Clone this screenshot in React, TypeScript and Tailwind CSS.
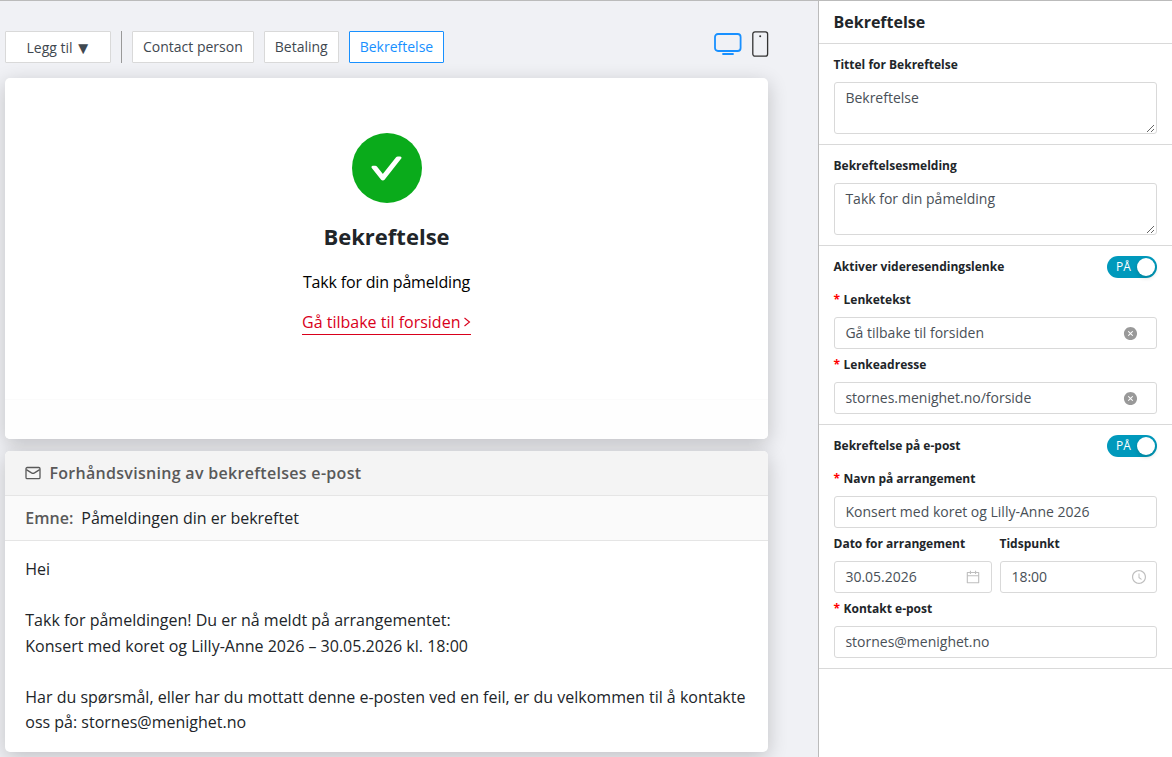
import type { ReactNode } from "react";
import {
  AiFillCloseCircle,
  AiOutlineCalendar,
  AiOutlineCheck,
  AiOutlineClockCircle,
} from "react-icons/ai";

function TabButton({ children, active = false }: { children: ReactNode; active?: boolean }) {
  return (
    <button
      className={
        "h-8 rounded-[1px] border bg-white px-[10px] whitespace-nowrap " +
        (active ? "border-[#1890ff] text-[#1890ff]" : "border-[#d9d9d9] text-[#3f4850]")
      }
    >
      {children}
    </button>
  );
}

function Section({ children }: { children: ReactNode }) {
  return <section className="border-b border-[#d9d9d9] pr-[15px] pb-[10px] pl-[15px]">{children}</section>;
}

function TextArea({ label, value }: { label: string; value: string }) {
  return (
    <Section>
      <div className="-ml-[0.5px] h-[38px] pt-[10px] text-xs leading-[22px] font-bold">{label}</div>
      <div className="flex h-[52px] justify-between rounded-[3px] border border-[#d9d9d9] pt-1 pl-[10.4px] leading-[22px] text-[#495057]">
        <span>{value}</span>
        <svg className="mr-px mb-0 size-[9px] self-end" viewBox="0 0 9 9" fill="none" stroke="#555" strokeWidth="0.9">
          <path d="M1 8 8 1M5 8l3-3" />
        </svg>
      </div>
    </Section>
  );
}

function ToggleRow({ label }: { label: string }) {
  return (
    <div className="mt-[10px] mb-[6px] flex h-[22px] items-center justify-between">
      <span className="-ml-[0.5px] text-xs leading-[22px] font-bold">{label}</span>
      <div className="flex h-[22px] w-[50px] items-center justify-between rounded-full bg-[#0099bc] pr-[2px] pl-[9px] text-xs text-white">
        <span>PÅ</span>
        <span className="size-[18px] rounded-full bg-white shadow-[0_2px_4px_rgba(0,35,11,0.2)]" />
      </div>
    </div>
  );
}

function Field({
  label,
  value,
  required = false,
  icon,
}: {
  label: string;
  value: string;
  required?: boolean;
  icon?: ReactNode;
}) {
  return (
    <div className="min-w-0">
      <div className="-ml-[0.5px] flex h-[33px] gap-[3.5px] pt-[5px] text-xs leading-[22px] font-bold">
        {required && <span className="text-[#f00]">*</span>}
        {label}
      </div>
      <div className="flex h-8 items-center justify-between rounded-[3px] border border-[#d9d9d9] pl-[10.4px] text-[#495057]">
        <span className="pb-px">{value}</span>
        {icon}
      </div>
    </div>
  );
}

function Toolbar() {
  return (
    <div className="flex h-8 text-sm">
      <button className="flex h-8 w-[106px] items-center justify-center gap-[2px] rounded-[1px] border border-[#d9d9d9] bg-white pt-px pl-[2px] text-[#3f4850]">
        Legg til <span className="text-[17px] leading-4">▼</span>
      </button>
      <div className="mx-[10px] w-px bg-[#999]" />
      <div className="flex gap-[10px]">
        <TabButton>Contact person</TabButton>
        <TabButton>Betaling</TabButton>
        <TabButton active>Bekreftelse</TabButton>
      </div>
      <div className="-mr-px ml-auto flex gap-[10px]">
        <svg className="mt-[2px] h-[23px] w-[28px]" viewBox="0 0 28 23" fill="none" stroke="#1890ff" strokeWidth="1.8" strokeLinecap="round">
          <rect x="1" y="1" width="25.6" height="17" rx="3" />
          <path d="M9 21h10" />
        </svg>
        <svg className="h-[26px] w-[17px]" viewBox="0 0 17 26" fill="none" stroke="#333" strokeWidth="1.3">
          <rect x="0.8" y="0.9" width="14.8" height="24.2" rx="2.2" />
          <circle cx="8.2" cy="5.3" r="1" fill="#333" stroke="none" />
        </svg>
      </div>
    </div>
  );
}

function ConfirmationCard() {
  return (
    <div className="mt-[15px] flex h-[361px] flex-col items-center rounded-[5px] bg-white pt-[55px] shadow-[0_5px_20px_rgba(0,0,0,0.2)]">
      <div className="flex size-[70px] items-center justify-center rounded-full bg-[#0aab1b]">
        <AiOutlineCheck className="size-[35px] text-white" stroke="currentColor" strokeWidth="64" strokeLinejoin="round" />
      </div>
      <h1 className="mt-[17px] text-[22px] leading-8 font-bold text-[#212529]">Bekreftelse</h1>
      <p className="mt-[18px] leading-6 tracking-[-0.18px] text-black">Takk for din påmelding</p>
      <a className="mt-[16px] flex h-[25px] items-center border-b border-[#d9001b] pl-[0.5px] text-[#d9001b]">
        Gå tilbake til forsiden
        <svg className="ml-[3px] h-[12px] w-[8px]" viewBox="0 0 8 12" fill="none" stroke="currentColor" strokeWidth="1.1">
          <path d="m1.5 2 5 4-5 4" />
        </svg>
      </a>
      <div className="mt-[64px] w-full flex-1 rounded-b-[5px] border-t border-[#fbfbfb] bg-[#fefefe]" />
    </div>
  );
}

function EmailPreview() {
  return (
    <div className="mt-3 h-[301px] rounded-[5px] bg-white leading-[25.6px] text-[#212529] shadow-[0_5px_20px_rgba(0,0,0,0.2)]">
      <div className="flex h-[45px] items-center gap-2 rounded-t-[5px] border-b border-[#e5e5e5] bg-[#f4f4f4] pl-5 font-semibold text-[#595959]">
        <svg className="size-4" viewBox="0 0 16 16" fill="none" stroke="currentColor" strokeWidth="1.3">
          <rect x="1" y="2.5" width="14" height="11.2" rx="1.2" />
          <path d="m1.3 4.6 5.2 3.3q1.5.9 3 0l5.2-3.3" />
        </svg>
        <span className="pt-[1.5px] pl-[0.4px] tracking-[0.3px]">Forhåndsvisning av bekreftelses e-post</span>
      </div>
      <div className="flex h-[45px] items-center gap-2 border-b border-[#e5e5e5] bg-[#fafafa] pt-[1.5px] pl-[20.3px]">
        <span className="font-semibold text-[#595959]">Emne:</span>
        <span>Påmeldingen din er bekreftet</span>
      </div>
      <div className="pt-[15.85px] pr-[19px] pl-[20.3px]">
        <p>Hei</p>
        <p className="mt-[25.6px]">
          Takk for påmeldingen! Du er nå meldt på arrangementet:
          <br />
          Konsert med koret og Lilly-Anne 2026 – 30.05.2026 kl. 18:00
        </p>
        <p className="mt-[25.6px]">
          Har du spørsmål, eller har du mottatt denne e-posten ved en feil, er du velkommen til å kontakte oss på:
          stornes@menighet.no
        </p>
      </div>
    </div>
  );
}

export default function App() {
  const clear = <AiFillCloseCircle className="mr-[18px] size-[15px] text-[#999]" />;
  return (
    <div className="flex h-[757px] w-[1172px] overflow-hidden border-t border-[#bbb] bg-[#f0f1f5] font-['Open_Sans',sans-serif]">
      <main className="w-[818px] pt-[30px] pr-[50px] pl-[5px]">
        <Toolbar />
        <ConfirmationCard />
        <EmailPreview />
      </main>
      <aside className="w-[354px] border-l border-[#bbb] bg-white text-sm text-[#212529]">
        <h2 className="h-[43px] border-b border-[#d9d9d9] pt-[9px] pl-[14.5px] text-base font-bold">Bekreftelse</h2>
        <TextArea label="Tittel for Bekreftelse" value="Bekreftelse" />
        <TextArea label="Bekreftelsesmelding" value="Takk for din påmelding" />
        <Section>
          <ToggleRow label="Aktiver videresendingslenke" />
          <Field required label="Lenketekst" value="Gå tilbake til forsiden" icon={clear} />
          <Field required label="Lenkeadresse" value="stornes.menighet.no/forside" icon={clear} />
        </Section>
        <Section>
          <ToggleRow label="Bekreftelse på e-post" />
          <Field required label="Navn på arrangement" value="Konsert med koret og Lilly-Anne 2026" />
          <div className="grid grid-cols-[158px_157px] gap-2">
            <Field
              label="Dato for arrangement"
              value="30.05.2026"
              icon={<AiOutlineCalendar className="mr-[10px] size-[16px] text-[#bfbfbf]" />}
            />
            <Field
              label="Tidspunkt"
              value="18:00"
              icon={<AiOutlineClockCircle className="mr-[9px] size-[16px] text-[#bfbfbf]" />}
            />
          </div>
          <Field required label="Kontakt e-post" value="stornes@menighet.no" />
        </Section>
      </aside>
    </div>
  );
}
